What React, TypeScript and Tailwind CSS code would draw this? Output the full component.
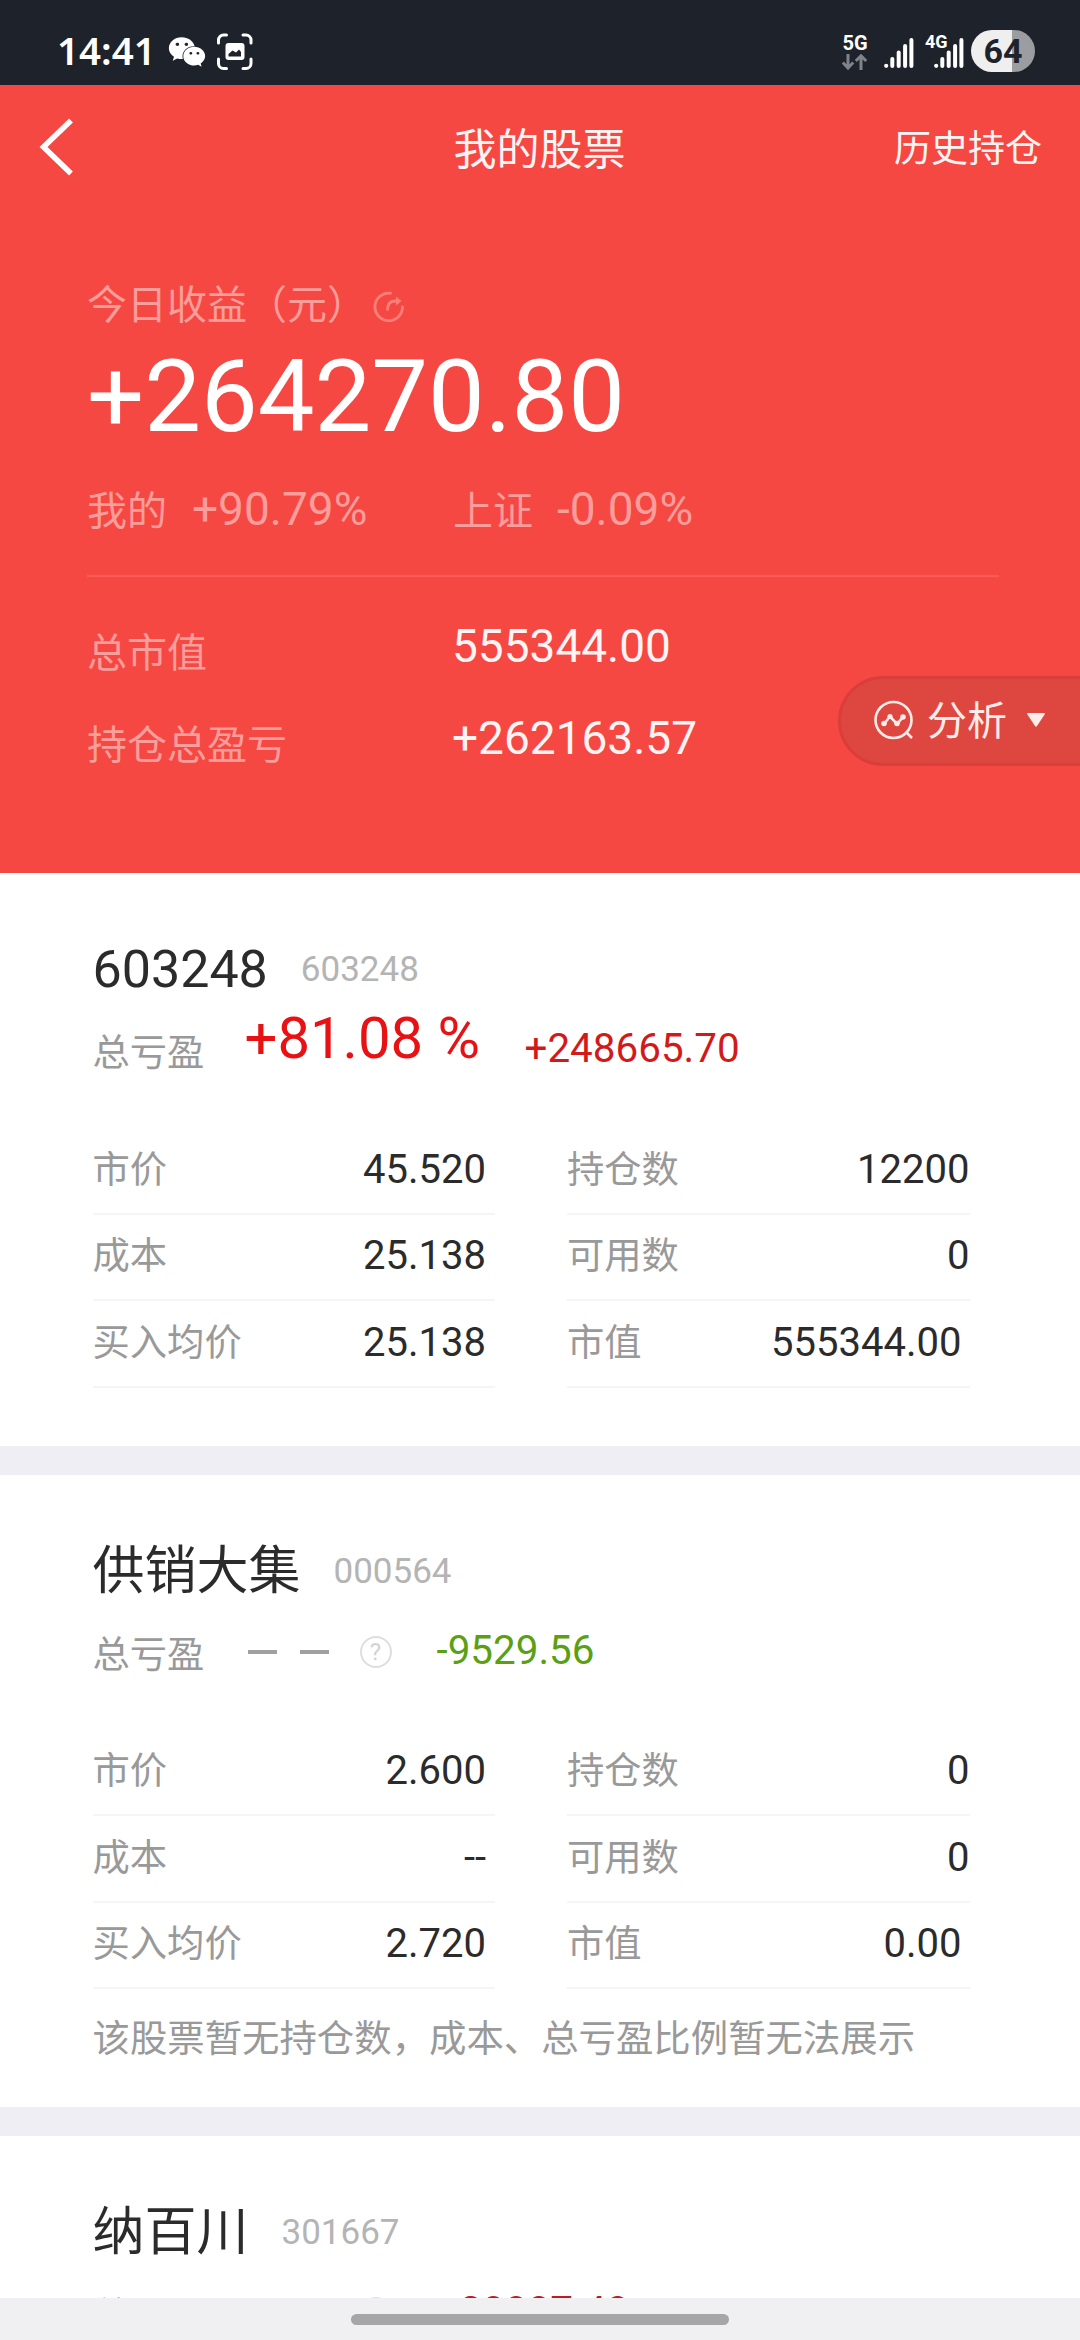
import { FaWeixin } from 'react-icons/fa';

type Cell = { label: string; value: string; inset?: boolean };

type Stock = {
  name: string;
  code: string;
  percent?: string;
  profit: string;
  profitColor: string;
  cells: Cell[];
  note?: string;
};

const stocks: Stock[] = [
  {
    name: '603248',
    code: '603248',
    percent: '+81.08 %',
    profit: '+248665.70',
    profitColor: 'text-[#d31a1a]',
    cells: [
      { label: '市价', value: '45.520' },
      { label: '持仓数', value: '12200' },
      { label: '成本', value: '25.138' },
      { label: '可用数', value: '0' },
      { label: '买入均价', value: '25.138' },
      { label: '市值', value: '555344.00', inset: true },
    ],
  },
  {
    name: '供销大集',
    code: '000564',
    profit: '-9529.56',
    profitColor: 'text-[#5aa012]',
    cells: [
      { label: '市价', value: '2.600' },
      { label: '持仓数', value: '0' },
      { label: '成本', value: '--' },
      { label: '可用数', value: '0' },
      { label: '买入均价', value: '2.720' },
      { label: '市值', value: '0.00', inset: true },
    ],
    note: '该股票暂无持仓数，成本、总亏盈比例暂无法展示',
  },
  {
    name: '纳百川',
    code: '301667',
    profit: '+20087.48',
    profitColor: 'text-[#b82020]',
    cells: [],
  },
];

const SignalBars = () => (
  <svg width="30" height="30" viewBox="0 0 30 30" fill="#fff">
    <circle cx="2.2" cy="27.8" r="2.1" />
    <rect x="6.3" y="19" width="4" height="11" rx="2" />
    <rect x="12.7" y="12.5" width="4" height="17.5" rx="2" />
    <rect x="19.1" y="6" width="4" height="24" rx="2" />
    <rect x="25.4" y="0" width="4" height="30" rx="2" />
  </svg>
);

const StatusBar = () => (
  <div className="flex h-[85px] items-start bg-[#1e222b] pl-[57px] pr-[45px] text-white">
    <div className="mt-[27px] w-[111px] whitespace-nowrap font-['Noto_Sans',sans-serif] text-[38.5px] font-semibold leading-[46px]">
      14:41
    </div>
    <FaWeixin className="mt-[33px] h-[38px] w-[38px]" />
    <svg className="ml-[10px] mt-[33px]" width="38" height="38" viewBox="0 0 38 38" fill="none">
      <path
        d="M2.500 10V7a5 5 0 0 1 5-5h3M27 2h3a5 5 0 0 1 5 5v3M35 26v4.500a5 5 0 0 1-5 5h-3M10.500 35.500h-3a5 5 0 0 1-5-5V26"
        stroke="#fff"
        strokeWidth="3"
        strokeLinecap="round"
      />
      <rect x="9.500" y="10" width="19" height="17" rx="3" fill="#fff" />
      <path d="M12.500 23.500v-2.500l4-3.500 3.500 2 3-3 2 2.500v4.500z" fill="#1e222b" />
    </svg>
    <div className="ml-auto mt-[34px] flex w-[26px] flex-col items-center font-[Roboto,sans-serif]">
      <div className="text-[20px] font-bold leading-[18px]">5G</div>
      <svg className="mt-[2px]" width="26" height="16" viewBox="0 0 26 16" fill="none" stroke="#80838a" strokeWidth="3">
        <path d="M6 0v14M.8 8.500 6 14l5.200-5.500M19 16V2M13.800 7 19 1.800 24.200 7" />
      </svg>
    </div>
    <div className="ml-[16px] mt-[38px]">
      <SignalBars />
    </div>
    <div className="relative ml-[20px] mt-[38px]">
      <SignalBars />
      <span className="absolute -left-[9px] -top-[6px] font-[Roboto,sans-serif] text-[18px] font-bold leading-[20px]">
        4G
      </span>
    </div>
    <div className="ml-[7px] mt-[30px] flex h-[42px] w-[64px] items-center justify-center rounded-full bg-[linear-gradient(90deg,#efeff0_64%,#9c9da1_64%)] font-[Roboto,sans-serif] text-[34px] font-bold leading-[42px] text-[#1e222b]">
      64
    </div>
  </div>
);

const Header = () => (
  <div className="flex h-[126px] items-center justify-between pl-[36px] pr-[38px] text-[#fff4f3]">
    <svg className="shrink-0" width="42" height="60" viewBox="0 0 42 60" fill="none" stroke="#fff" strokeWidth="5.500">
      <path d="M35 2.500 7.500 29 35 55.500" />
    </svg>
    <div className="ml-[107px] mt-[4px] text-[43px] leading-[60px]">我的股票</div>
    <div className="mt-[4px] text-[37px] leading-[60px]">历史持仓</div>
  </div>
);

const AnalyseButton = () => (
  <div className="absolute left-[838px] top-[591px] flex h-[90px] w-[260px] items-center rounded-l-full border-[3px] border-[#d93e3b] bg-[#de473f] pl-[32px] text-[#ffebea]">
    <svg width="42" height="42" viewBox="0 0 42 42" fill="none" stroke="#ffebea" strokeWidth="2.600">
      <circle cx="20.500" cy="20" r="18" />
      <path d="M33 32 39 38M11 24 17 16.500l7 7.500 6-7" />
      <g fill="#ffebea" stroke="none">
        <circle cx="11" cy="23.500" r="2.800" />
        <circle cx="17" cy="16.500" r="2.600" />
        <circle cx="24" cy="23.500" r="2.800" />
        <circle cx="30" cy="17" r="2.800" />
      </g>
    </svg>
    <span className="ml-[12px] mt-[1px] text-[40px] leading-[60px]">分析</span>
    <svg className="ml-[20px] -mt-[3px]" width="18" height="14" viewBox="0 0 18 14" fill="#ffebea">
      <path d="M1 0h16q1.500 0 .6 1.400L10 13q-1 1.300-2 0L.4 1.400Q-.5 0 1 0z" />
    </svg>
  </div>
);

const Summary = () => (
  <div className="px-[87px] text-[40px] text-[#fb9d9a]">
    <div className="mt-[65px] flex h-[60px] items-center leading-[60px]">
      今日收益（元）
      <svg className="ml-[6px] mt-[1px]" width="32" height="32" viewBox="0 0 32 32" fill="none" stroke="#fb7e79" strokeWidth="2.800">
        <path d="M17.500 2.200A13.800 13.800 0 1 0 29.500 16" strokeLinecap="round" />
        <path d="M14.500 18.500c0-5.800 2.500-8.500 8-8.500h2" strokeLinecap="round" />
        <path d="m23 5.500 5.500 4.500-5.500 4.500z" fill="#fb7e79" stroke="none" />
      </svg>
    </div>
    <div className="h-[122px] text-[101px] leading-[122px] text-white">+264270.80</div>
    <div className="mt-[21px] flex h-[60px] items-baseline leading-[60px]">
      <span className="w-[105px]">我的</span>
      <span className="w-[261px] text-[46px]">+90.79%</span>
      <span className="w-[104px]">上证</span>
      <span className="text-[46px]">-0.09%</span>
    </div>
    <div className="mt-[36px] h-[2px] w-[912px] bg-[#fd5b55]" />
    <div className="mt-[44px] flex h-[60px] leading-[60px]">
      <span className="mt-[3px] w-[365px]">总市值</span>
      <span className="-mt-[5px] text-[46px] text-[#fff4f3]">555344.00</span>
    </div>
    <div className="mt-[32px] flex h-[60px] leading-[60px]">
      <span className="mt-[3px] w-[365px]">持仓总盈亏</span>
      <span className="-mt-[5px] text-[46px] text-[#fff4f3]">+262163.57</span>
    </div>
  </div>
);

const EmptyPercent = () => (
  <div className="flex w-[192px] items-center pb-[5px] pl-[3px]">
    <span className="h-[4px] w-[29px] bg-[#a0a0a0]" />
    <span className="ml-[23px] h-[4px] w-[29px] bg-[#a0a0a0]" />
    <span className="ml-[31px] flex h-[32px] w-[32px] items-center justify-center rounded-full border-2 border-[#dedede] text-[24px] leading-[28px] text-[#d2d2d2]">
      ?
    </span>
  </div>
);

const StockCard = ({ stock }: { stock: Stock }) => (
  <section className="bg-white pl-[92.5px] pt-[67px]">
    <div className="flex h-[60px] items-baseline leading-[60px]">
      <h2 className="text-[52px] text-[#2b2b2b]">{stock.name}</h2>
      <span className="relative -top-[6px] ml-[33px] text-[35px] text-[#b4b4b4]">{stock.code}</span>
    </div>
    <div className="mt-[23px] flex h-[60px] leading-[60px]">
      <span className="w-[152px] text-[37.3px] text-[#999]">总亏盈</span>
      {stock.percent ? (
        <span className="-mt-[15px] w-[280px] text-[58px] text-[#e81114]">{stock.percent}</span>
      ) : (
        <EmptyPercent />
      )}
      <span className={`-mt-[4px] text-[40.4px] ${stock.profitColor}`}>{stock.profit}</span>
    </div>
    <div className="mt-[45px] grid w-[877px] grid-cols-2 gap-x-[72px]">
      {stock.cells.map((cell, i) => (
        <div
          key={cell.label}
          className={`flex h-[86.5px] items-end justify-between border-b-[2px] border-[#f5f5f6] pb-[13px] leading-[60px] ${i % 2 === 0 ? 'pr-[9px]' : ''}`}
        >
          <span className="text-[37.3px] text-[#999]">{cell.label}</span>
          <span className={`text-[40px] text-[#2b2b2b] ${cell.inset ? 'pr-[8px]' : ''}`}>{cell.value}</span>
        </div>
      ))}
    </div>
    {stock.note ? (
      <p className="mt-[20px] h-[97.5px] whitespace-nowrap text-[37.4px] leading-[60px] text-[#999]">{stock.note}</p>
    ) : (
      <div className="h-[58px]" />
    )}
  </section>
);

export default function App() {
  return (
    <div className="flex h-[2340px] w-[1080px] flex-col overflow-hidden bg-white font-[Roboto,'Noto_Sans_CJK_SC',sans-serif]">
      <StatusBar />
      <div className="relative h-[788px] shrink-0 bg-[#f64843]">
        <Header />
        <Summary />
        <AnalyseButton />
      </div>
      <main className="flex h-[1425px] shrink-0 flex-col gap-[29px] overflow-hidden bg-[#efeef4]">
        {stocks.map((stock) => (
          <StockCard key={stock.code} stock={stock} />
        ))}
      </main>
      <footer className="h-[42px] shrink-0 bg-[#f0f0f2] pt-[16px]">
        <div className="mx-auto h-[11px] w-[378px] rounded-full bg-[#a6a6a8]" />
      </footer>
    </div>
  );
}
